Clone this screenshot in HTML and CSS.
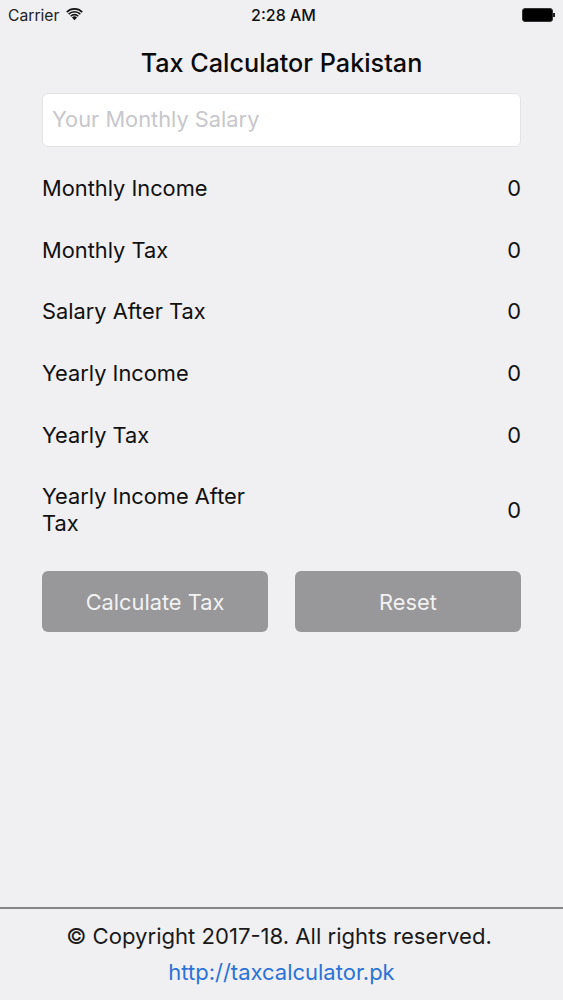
FILE: index.html
```html
<!DOCTYPE html>
<html>
  <head>
    <title>Tax Calculator Pakistan</title>
    <link rel="stylesheet" href="styles.css">
  </head>
  <body>
    <div class="phone">
      <div class="status-bar">
        <div class="status-left">
          <span>Carrier</span>
          <svg class="wifi" viewBox="0 0 16 12" width="17" height="13">
            <path d="M8 11.500 5.600 8.800a3.400 3.400 0 0 1 4.800 0z" fill="#111"></path>
            <path d="M3.900 7.100a5.800 5.800 0 0 1 8.200 0l-1 1.100a4.300 4.300 0 0 0-6.200 0z" fill="#111"></path>
            <path d="M2 5.100a8.500 8.500 0 0 1 12 0l-1 1.100a7 7 0 0 0-10 0z" fill="#111"></path>
            <path d="M.2 3.200a11 11 0 0 1 15.600 0l-1 1.100a9.600 9.600 0 0 0-13.600 0z" fill="#111"></path>
          </svg>
        </div>
        <div class="status-time">2:28 AM</div>
        <div class="battery">
          <div class="battery-body"></div>
          <div class="battery-tip"></div>
        </div>
      </div>

      <div class="content">
        <h1>Tax Calculator Pakistan</h1>
        <div class="salary-input">Your Monthly Salary</div>

        <div class="rows">
          <div class="row"><span>Monthly Income</span><span>0</span></div>
          <div class="row"><span>Monthly Tax</span><span>0</span></div>
          <div class="row"><span>Salary After Tax</span><span>0</span></div>
          <div class="row"><span>Yearly Income</span><span>0</span></div>
          <div class="row"><span>Yearly Tax</span><span>0</span></div>
          <div class="row row-tall"><span class="row-label">Yearly Income After Tax</span><span class="row-value">0</span></div>
        </div>

        <div class="buttons">
          <button>Calculate Tax</button>
          <button>Reset</button>
        </div>
      </div>

      <div class="footer">
        <div class="copyright">© Copyright 2017-18. All rights reserved.</div>
        <a class="site-link" href="#">http://taxcalculator.pk</a>
      </div>
    </div>
  </body>
</html>
```

FILE: styles.css
```css
* {
  box-sizing: border-box;
}
html, body {
  margin: 0;
  padding: 0;
}
body {
  background-color: #f0eff2;
  font-family: "Inter", "Roboto", sans-serif;
  color: #111;
}
.phone {
  width: 563px;
  height: 1000px;
  display: flex;
  flex-direction: column;
  overflow: hidden;
}

/* Status bar */
.status-bar {
  height: 30px;
  padding: 0 8px;
  display: flex;
  align-items: center;
  justify-content: space-between;
  position: relative;
  font-size: 15.7px;
  color: #222;
}
.status-left {
  display: flex;
  align-items: center;
  gap: 7px;
}
.wifi {
  margin-top: -2px;
}
.status-time {
  font-weight: 500;
  font-size: 16px;
  color: #111;
  position: absolute;
  left: 0;
  right: 0;
  text-align: center;
  padding-left: 4px;
}
.battery {
  display: flex;
  align-items: center;
}
.battery-body {
  width: 31px;
  height: 14px;
  background-color: #000;
  border: 1px solid #333;
  border-radius: 3px;
}
.battery-tip {
  width: 2px;
  height: 4px;
  background-color: #222;
}

/* Main form */
.content {
  flex: 1;
  padding: 0 42px;
}
h1 {
  margin: 18px 0 0;
  height: 30px;
  line-height: 30px;
  font-size: 25.2px;
  font-weight: 500;
  text-align: center;
  color: #0a0a0a;
}
.salary-input {
  margin-top: 15px;
  height: 54px;
  line-height: 50px;
  padding-left: 9px;
  background-color: #fff;
  border: 1px solid #e3e3e6;
  border-radius: 6px;
  font-size: 21.8px;
  color: #c7c7cc;
}
.rows {
  margin-top: 10px;
}
.row {
  height: 61.75px;
  display: flex;
  align-items: center;
  justify-content: space-between;
  font-size: 21.8px;
}
.row-tall {
  height: 87.5px;
  line-height: 27px;
}
.row-label {
  width: 225px;
}
.row-value {
  margin-top: 2px;
}
.buttons {
  margin-top: 18px;
  display: flex;
  gap: 27px;
}
button {
  flex: 1;
  height: 61px;
  padding-top: 2px;
  background-color: #98979a;
  border: none;
  border-radius: 6px;
  color: #f2f2f2;
  font-family: inherit;
  font-size: 21.8px;
}

/* Footer */
.footer {
  height: 93px;
  border-top: 2px solid #858585;
  text-align: center;
  font-size: 22px;
}
.copyright {
  margin-top: 13px;
  padding-right: 5px;
  font-size: 22.1px;
  line-height: 28px;
  color: #1a1a1a;
}
.site-link {
  display: block;
  margin-top: 8px;
  line-height: 28px;
  color: #2b73d6;
  text-decoration: none;
}
```
